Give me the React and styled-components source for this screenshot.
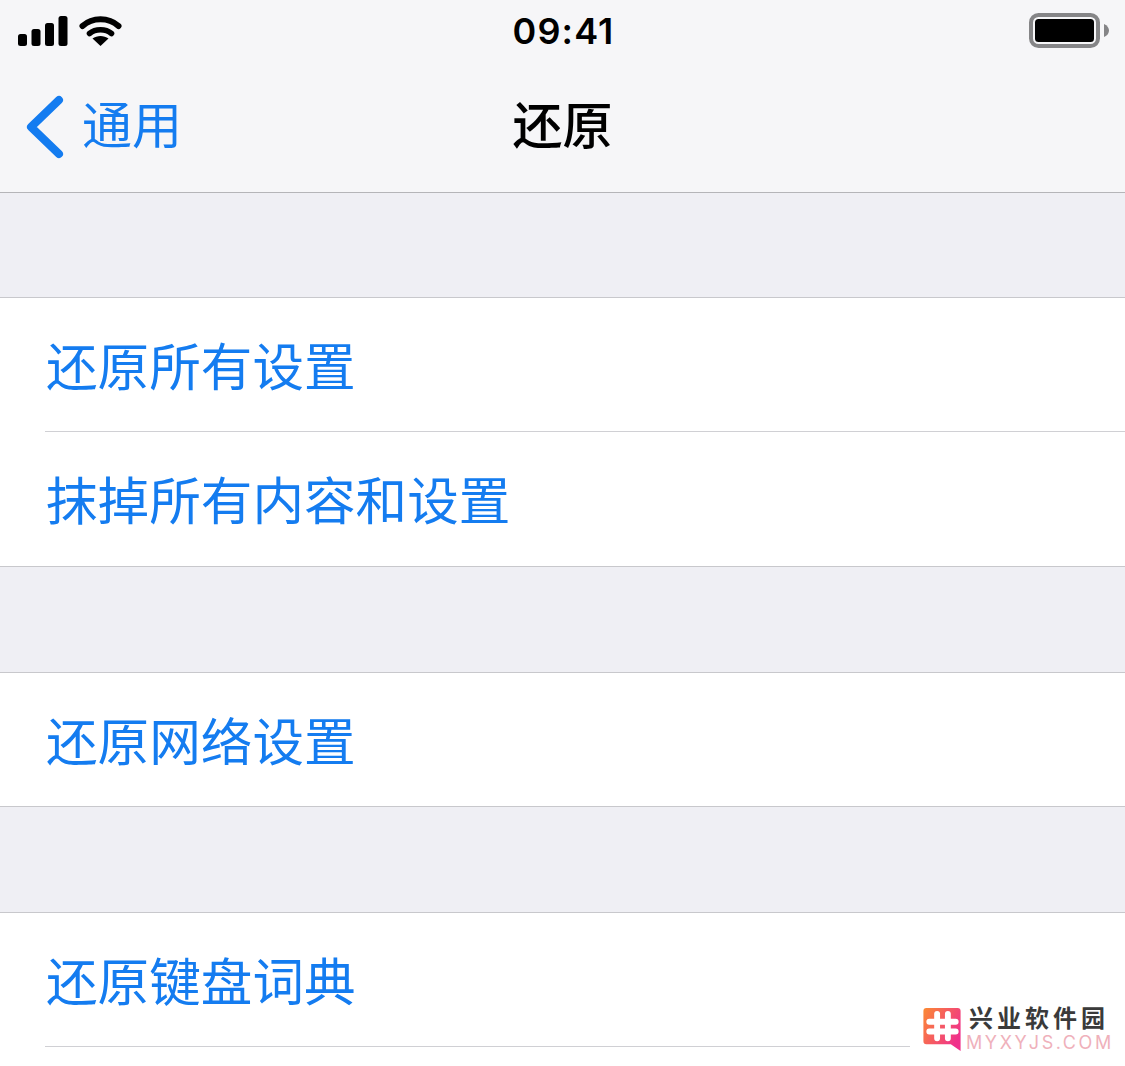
import React from "react";
import styled, { createGlobalStyle } from "styled-components";

const Global = createGlobalStyle`
  html, body { margin: 0; padding: 0; background: #fff; }
  body { font-family: "Liberation Sans", "Noto Sans CJK SC", sans-serif; }
`;
const Page = styled.div`
  position: relative;
  width: 1125px;
  height: 1066px;
  overflow: hidden;
  background: #fff;
`;
const Header = styled.header`
  height: 192px;
  background: #f6f6f8;
  border-bottom: 1px solid #b5b5b8;
  display: flex;
  flex-direction: column;
`;
const StatusBar = styled.div`
  height: 62px;
  display: grid;
  grid-template-columns: 1fr auto 1fr;
  align-items: center;
  padding: 0 16px 0 18px;
`;
const Signals = styled.div`
  display: flex;
  align-items: center;
  gap: 11px;
`;
const Clock = styled.div`
  font-family: "Inter", "Liberation Sans", sans-serif;
  font-size: 36px;
  font-weight: 600;
  letter-spacing: 1.1px;
  color: #000;
`;
const Battery = styled.div`
  justify-self: end;
  display: flex;
`;
const NavBar = styled.nav`
  flex: 1;
  display: grid;
  grid-template-columns: 1fr auto 1fr;
  align-items: center;
`;
const Back = styled.div`
  display: flex;
  align-items: center;
  gap: 16px;
  margin-left: 26px;
  color: #147cf0;
  font-size: 50px;
  line-height: 1;
`;
const Title = styled.div`
  font-size: 50px;
  font-weight: 500;
  line-height: 1;
  color: #000;
`;
const Gap = styled.div`
  height: ${(p) => p.$h || 104}px;
  background: #efeff4;
  border-bottom: 1px solid #c8c8cc;
`;
const Group = styled.section`
  background: #fff;
  border-bottom: ${(p) => (p.$open ? "none" : "1px solid #c8c8cc")};
`;
const Row = styled.div`
  height: ${(p) => p.$h || 133}px;
  margin-left: 45px;
  padding: 8px 0 0 1px;
  display: flex;
  align-items: center;
  color: #147cf0;
  font-size: 51.6px;
  line-height: 1;
  box-sizing: border-box;
  border-bottom: ${(p) => (p.$line ? "1px solid #d0d0d4" : "none")};
`;
const Watermark = styled.div`
  position: absolute;
  right: 0;
  bottom: 0;
  width: 215px;
  height: 60px;
  background: #fff;
  display: flex;
  gap: 5px;
  padding-left: 13px;
  box-sizing: border-box;
`;
const MarkIcon = styled.svg`
  margin-top: 2px;
  flex: none;
`;
const MarkText = styled.div`
  display: flex;
  flex-direction: column;
`;
const MarkCn = styled.div`
  font-size: 24px;
  line-height: 26px;
  font-weight: 700;
  letter-spacing: 4px;
  margin-left: 3px;
  white-space: nowrap;
  color: #3a3a3a;
`;
const MarkEn = styled.div`
  font-family: "Inter", "Liberation Sans", sans-serif;
  font-size: 18px;
  line-height: 20px;
  margin-top: 1px;
  letter-spacing: 2.6px;
  white-space: nowrap;
  color: #efb1bb;
`;

export default function App() {
  return (
    <Page>
      <Global />
      <Header>
        <StatusBar>
          <Signals>
            <svg width="50" height="30" viewBox="0 0 50 30">
              <rect x="0" y="18" width="9" height="12" rx="2.5" />
              <rect x="13.5" y="13" width="9" height="17" rx="2.5" />
              <rect x="27" y="7" width="9" height="23" rx="2.5" />
              <rect x="40.5" y="0" width="9" height="30" rx="2.5" />
            </svg>
            <svg width="43" height="30" viewBox="0 0 42 30" style={{ marginTop: -1 }}>
              <path d="M3 10C13 1 29 1 39 10" fill="none" stroke="#000" strokeWidth="6" strokeLinecap="round" />
              <path d="M10 17.5C16 12.5 26 12.5 32 17.5" fill="none" stroke="#000" strokeWidth="5.6" strokeLinecap="round" />
              <path d="M21 30L13 22.5C17.5 19 24.5 19 29 22.5Z" fill="#000" />
            </svg>
          </Signals>
          <Clock>09:41</Clock>
          <Battery>
            <svg width="80" height="36" viewBox="0 0 80 36">
              <rect x="2" y="2" width="67" height="31" rx="7.5" fill="none" stroke="#858587" strokeWidth="4" />
              <rect x="6" y="6" width="59" height="23" rx="3.5" fill="#000" />
              <path d="M75 11C78.5 12.5 80 15 80 17.5S78.5 22.5 75 24Z" fill="#858587" />
            </svg>
          </Battery>
        </StatusBar>
        <NavBar>
          <Back>
            <svg width="40" height="64" viewBox="0 0 40 64">
              <path d="M33 5L5 32L33 59" fill="none" stroke="#147cf0" strokeWidth="8" strokeLinecap="round" strokeLinejoin="round" />
            </svg>
            <span>通用</span>
          </Back>
          <Title>还原</Title>
        </NavBar>
      </Header>
      <Gap />
      <Group>
        <Row $h={134} $line>还原所有设置</Row>
        <Row $h={134}>抹掉所有内容和设置</Row>
      </Group>
      <Gap $h={105} />
      <Group>
        <Row>还原网络设置</Row>
      </Group>
      <Gap $h={105} />
      <Group $open>
        <Row $h={134} $line>还原键盘词典</Row>
      </Group>
      <Watermark>
        <MarkIcon width="38" height="45" viewBox="0 0 38 46">
          <defs>
            <linearGradient id="wm" x1="0" y1="0" x2="1" y2="0.6">
              <stop offset="0" stopColor="#fb8a33" />
              <stop offset="1" stopColor="#f0308c" />
            </linearGradient>
          </defs>
          <path d="M3 0H35a3 3 0 0 1 3 3V44L28 37H3a3 3 0 0 1-3-3V3a3 3 0 0 1 3-3Z" fill="url(#wm)" />
          <path d="M14 6V31M25 6V31M6 14H33M6 24H33" stroke="#fff" strokeWidth="6" strokeLinecap="round" fill="none" />
        </MarkIcon>
        <MarkText>
          <MarkCn>兴业软件园</MarkCn>
          <MarkEn>MYXYJS.COM</MarkEn>
        </MarkText>
      </Watermark>
    </Page>
  );
}
